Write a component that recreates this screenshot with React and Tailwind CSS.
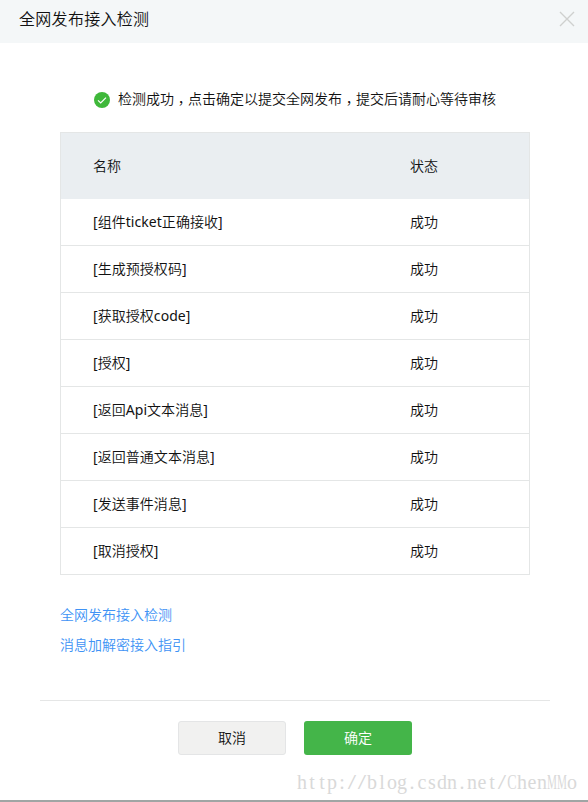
const checks = [
  { name: '[组件ticket正确接收]', status: '成功' },
  { name: '[生成预授权码]', status: '成功' },
  { name: '[获取授权code]', status: '成功' },
  { name: '[授权]', status: '成功' },
  { name: '[返回Api文本消息]', status: '成功' },
  { name: '[返回普通文本消息]', status: '成功' },
  { name: '[发送事件消息]', status: '成功' },
  { name: '[取消授权]', status: '成功' },
]

const links = ['全网发布接入检测', '消息加解密接入指引']

// every watermark glyph is fitted to the same cell width
const cellFit = {
  C: 'scale-x-70',
  M: 'scale-x-[0.56]',
  '/': 'scale-x-150',
}

// the TC comma sits in the middle of its cell, so only lower it to the baseline
function Comma() {
  return <span className="relative top-[4px] font-['Noto_Sans_CJK_TC',sans-serif] leading-none">，</span>
}

function Watermark({ text }) {
  return (
    <div className="absolute left-[297px] top-[770px] flex font-['Liberation_Serif',serif] text-[20px] leading-6 font-normal text-[#d9d9d9]">
      {text.split('').map((ch, i) => (
        <span key={i} className={`flex w-[10px] shrink-0 justify-center ${cellFit[ch] || ''}`}>{ch}</span>
      ))}
    </div>
  )
}

export default function App() {
  return (
    <div className="relative flex h-[802px] w-[588px] flex-col overflow-hidden border-b-2 border-[#a0a5a4] bg-white font-['Noto_Sans','Noto_Sans_CJK_SC',sans-serif] text-sm font-[350] text-[#111]">
      <header className="flex h-[43px] shrink-0 items-center justify-between bg-[#f4f7f8] pr-[13px] pb-1.5 pl-[19px]">
        <h1 className="text-base leading-6 font-[350] tracking-[0.3px]">全网发布接入检测</h1>
        <button aria-label="关闭">
          <svg width="16" height="16" viewBox="0 0 16 16" fill="none" stroke="#cfd0cf" strokeWidth="1.4">
            <path d="M1 1l14 14M15 1L1 15" />
          </svg>
        </button>
      </header>

      <main className="px-[60px] pt-[45px]">
        <p className="flex h-[22px] items-center pl-[34px]">
          <svg className="mt-0.5 mr-2 shrink-0" width="16" height="16" viewBox="0 0 16 16" fill="none">
            <circle cx="8" cy="8" r="8" fill="#3fb83a" />
            <path d="M4 8.4l2.7 2.6L12 5.6" stroke="#fff" strokeWidth="1.2" />
          </svg>
          <span className="whitespace-nowrap">
            检测成功<Comma />点击确定以提交全网发布<Comma />提交后请耐心等待审核
          </span>
        </p>

        <div className="mt-[22px] w-[470px] border border-[#e4e6e6]">
          <div className="flex h-[66px] items-center bg-[#eaeef1] pl-8">
            <span className="w-[317px]">名称</span>
            <span>状态</span>
          </div>
          {checks.map((row) => (
            <div key={row.name} className="flex h-[47px] items-center border-b border-[#e4e6e6] pl-8 last:h-[46px] last:border-b-0">
              <span className="w-[317px] font-['Noto_Sans','Noto_Sans_CJK_SC_DemiLight','Noto_Sans_CJK_SC',sans-serif] font-normal tracking-[0.05px]">{row.name}</span>
              <span>{row.status}</span>
            </div>
          ))}
        </div>

        <div className="mt-[25px] flex flex-col items-start text-[#4093f5]">
          {links.map((text) => (
            <a key={text} href="#" className="leading-[30px]">{text}</a>
          ))}
        </div>
      </main>

      <footer className="mr-[38px] ml-10 mt-10 flex justify-center gap-[18px] border-t border-[#e5e6e6] pt-5">
        <button className="h-[34px] w-[108px] rounded-[3px] border border-[#e4e5e6] bg-[#f1f1f0]">取消</button>
        <button className="h-[34px] w-[108px] rounded-[3px] bg-[#44b549] text-white">确定</button>
      </footer>

      <Watermark text="http://blog.csdn.net/ChenMMo" />
    </div>
  )
}
